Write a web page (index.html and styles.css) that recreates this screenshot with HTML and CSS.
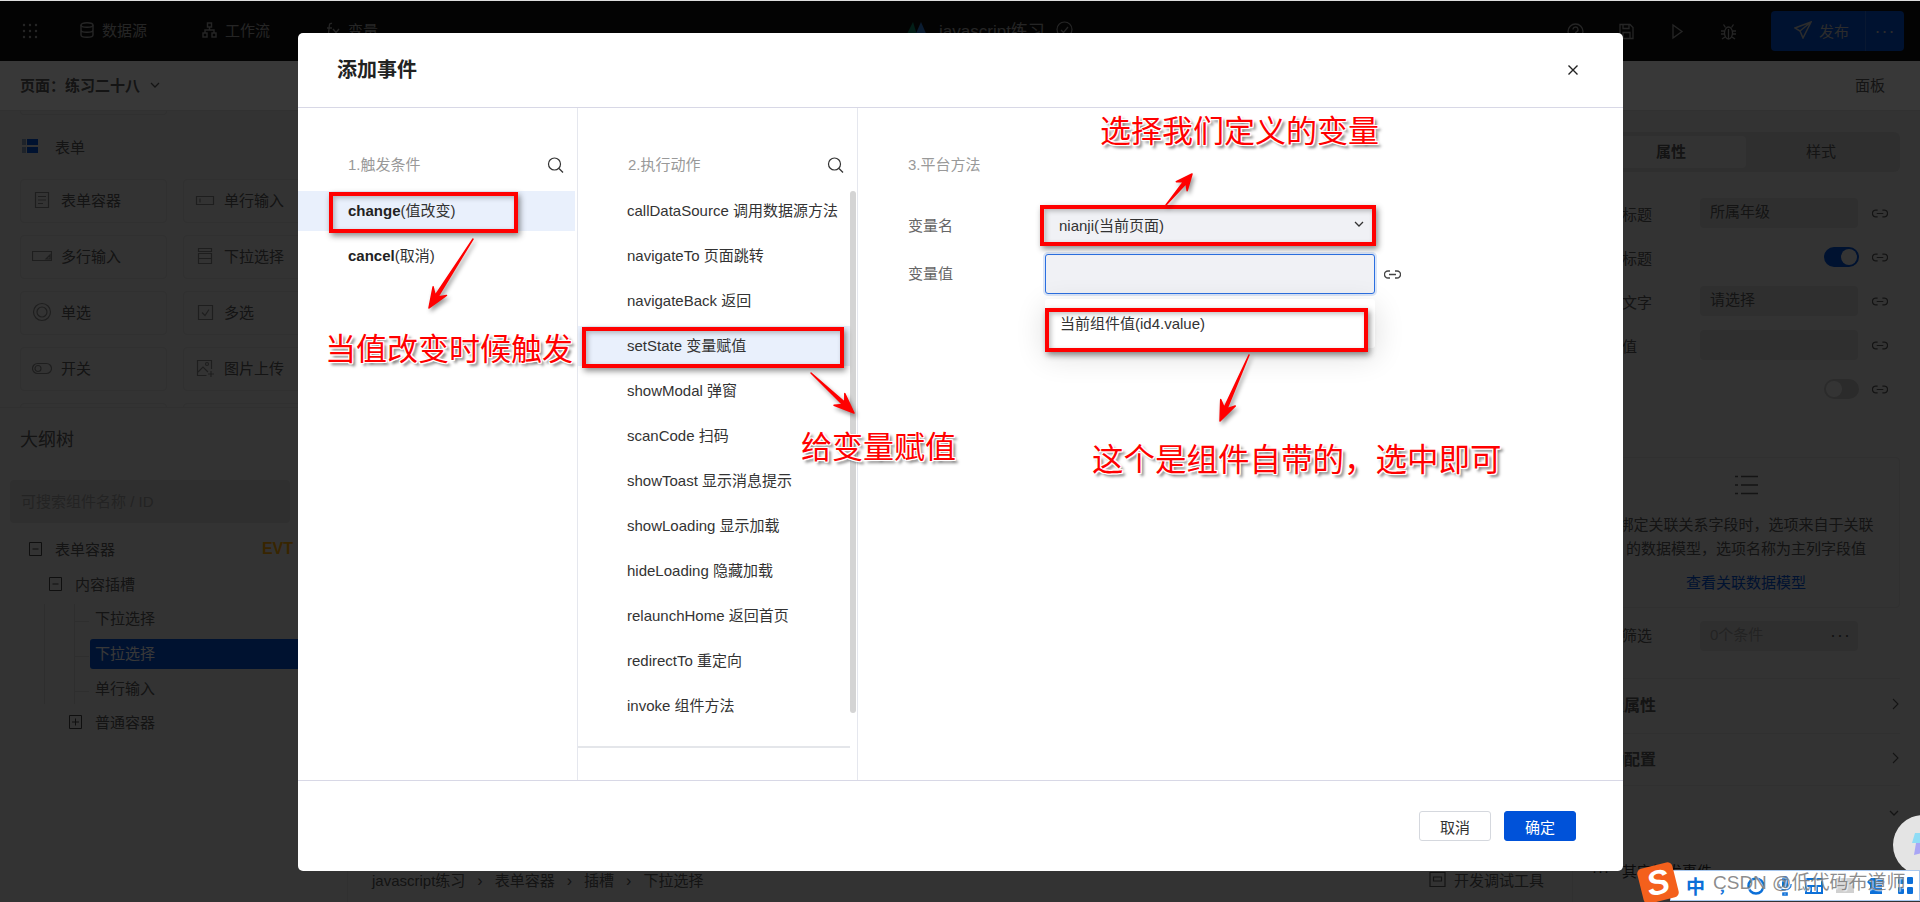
FILE: index.html
```html
<!DOCTYPE html>
<html lang="zh-CN">
<head>
  <meta charset="UTF-8">
  <title>添加事件</title>
  <link rel="stylesheet" href="styles.css">
</head>
<body>

<svg class="sprite" width="0" height="0">
  <symbol id="i-link" viewBox="0 0 17 9"><path d="M6 1H4a3.5 3.5 0 0 0 0 7h2M11 1h2a3.5 3.5 0 0 1 0 7h-2M5 4.5h7" fill="none" stroke="currentColor" stroke-width="1.3"/></symbol>
  <symbol id="i-search" viewBox="0 0 17 16"><circle cx="7.5" cy="7" r="6" fill="none" stroke="currentColor" stroke-width="1.2"/><path d="M12 11.5l4 4" stroke="currentColor" stroke-width="1.3"/></symbol>
  <symbol id="i-down" viewBox="0 0 10 6"><path d="M1 1l4 4 4-4" fill="none" stroke="currentColor" stroke-width="1.3"/></symbol>
  <symbol id="i-right" viewBox="0 0 7 12"><path d="M1 1l5 5-5 5" fill="none" stroke="currentColor" stroke-width="1.1"/></symbol>
  <symbol id="i-minus" viewBox="0 0 13 14"><path d="M.5.5h12v13H.5zM3.5 7h6" fill="none" stroke="currentColor"/></symbol>
  <symbol id="i-plus" viewBox="0 0 13 14"><path d="M.5.5h12v13H.5zM3 7h7M6.500 3.500v7" fill="none" stroke="currentColor"/></symbol>
</svg>

<div class="app">
  <header class="topbar">
    <svg class="grid-icon" width="16" height="16" viewBox="0 0 16 16" fill="currentColor"><circle cx="2" cy="2" r="1.2"/><circle cx="8" cy="2" r="1.2"/><circle cx="14" cy="2" r="1.2"/><circle cx="2" cy="8" r="1.2"/><circle cx="8" cy="8" r="1.2"/><circle cx="14" cy="8" r="1.2"/><circle cx="2" cy="14" r="1.2"/><circle cx="8" cy="14" r="1.2"/><circle cx="14" cy="14" r="1.2"/></svg>
    <nav class="top-nav">
      <span class="top-nav-item">
        <svg width="14" height="16" viewBox="0 0 14 16" fill="none" stroke="currentColor" stroke-width="1.4"><ellipse cx="7" cy="3" rx="6" ry="2.300"/><path d="M1 3v10c0 1.300 2.700 2.300 6 2.300s6-1 6-2.300V3M1 8c0 1.300 2.700 2.300 6 2.300s6-1 6-2.300"/></svg>
        数据源
      </span>
      <span class="top-nav-item">
        <svg width="15" height="16" viewBox="0 0 15 16" fill="none" stroke="currentColor" stroke-width="1.4"><rect x="5.500" y="1" width="4" height="4"/><rect x="1" y="11" width="4" height="4"/><rect x="10" y="11" width="4" height="4"/><path d="M7.500 5v3M3 11V8h9v3"/></svg>
        工作流
      </span>
      <span class="top-nav-item">
        <svg width="15" height="16" viewBox="0 0 15 16" fill="none" stroke="currentColor" stroke-width="1.3"><path d="M7 1.500C5 1 4.500 2 4.300 4L3.500 12c-.2 2-1 2.500-2.500 2M2 6h5M8 7l6 7M14 7l-6 7"/></svg>
        变量
      </span>
    </nav>
    <div class="app-title">
      <svg width="23" height="16" viewBox="0 0 23 16"><path d="M0 16L8 0l5 16z" fill="#0d8a6a"/><path d="M9 16L16 0l7 16z" fill="#2f7fe0"/></svg>
      <span>javascript练习</span>
      <svg width="17" height="17" viewBox="0 0 17 17" fill="none" stroke="currentColor" stroke-width="1.200"><circle cx="8.500" cy="8.500" r="7.500"/><path d="M5 9l2.500 2.500L12 6"/></svg>
    </div>
    <div class="top-tools">
      <svg width="17" height="17" viewBox="0 0 17 17" fill="none" stroke="currentColor" stroke-width="1.300"><circle cx="8.500" cy="8.500" r="7.500"/><path d="M6 6.500a2.500 2.500 0 1 1 3.500 2.300c-.7.300-1 .8-1 1.700M8.500 12v1.500"/></svg>
      <svg width="17" height="17" viewBox="0 0 17 17" fill="none" stroke="currentColor" stroke-width="1.300"><path d="M2 1.500h10l3 3v11H2zM5 1.500v4h6v-4M5 15.500v-6h7v6"/></svg>
      <svg width="17" height="17" viewBox="0 0 17 17" fill="none" stroke="currentColor" stroke-width="1.300"><path d="M4 2v13l9-6.500z"/></svg>
      <svg width="17" height="17" viewBox="0 0 17 17" fill="none" stroke="currentColor" stroke-width="1.300"><ellipse cx="8.500" cy="10" rx="4" ry="6"/><path d="M5.500 4.500l-2-3M11.500 4.500l2-3M4.500 8H1M4.500 11H1M5 14l-3 2M12.500 8H16M12.500 11H16M12 14l3 2M8.500 6v10"/></svg>
      <div class="publish">
        <span class="publish-main">
          <svg width="18" height="18" viewBox="0 0 18 18" fill="none" stroke="currentColor" stroke-width="1.500"><path d="M17 1L1 7l5 3 3 7zM6 10L17 1"/></svg>
          发布
        </span>
        <span class="publish-more">···</span>
      </div>
    </div>
  </header>

  <div class="subbar">
    <span class="page-name">页面：练习二十八 <svg width="10" height="6"><use href="#i-down"/></svg></span>
    <span class="panel-link">面板</span>
  </div>

  <main class="workspace">
    <aside class="left-panel">
      <section class="widgets">
        <div class="widget-stub"></div>
        <h3 class="widgets-title">
          <svg width="16" height="14" viewBox="0 0 16 14"><rect width="4" height="6" fill="#8aa0c0"/><rect x="5" width="11" height="6" fill="#0052d9"/><rect y="8" width="4" height="6" fill="#8aa0c0"/><rect x="5" y="8" width="11" height="6" fill="#0052d9"/></svg>
          表单
        </h3>
        <div class="widget-grid">
          <div class="widget"><svg viewBox="0 0 20 20" class="widget-icon"><path d="M3.500 2.500h13v15h-13zM6 6.500h8M6 10h8M6 13.500h5"/></svg>表单容器</div>
          <div class="widget"><svg viewBox="0 0 20 20" class="widget-icon"><path d="M1.500 6.500h17v8h-17zM5 8.500v4"/></svg>单行输入</div>
          <div class="widget"><svg viewBox="0 0 20 20" class="widget-icon"><path d="M.5 5.500h19v9H.5zM18 9l-4 4h4z"/></svg>多行输入</div>
          <div class="widget"><svg viewBox="0 0 20 20" class="widget-icon"><path d="M3.500 2.500h13v3h-13zM3.500 7.500h13v10h-13zM3.500 12.500h13"/></svg>下拉选择</div>
          <div class="widget"><svg viewBox="0 0 20 20" class="widget-icon"><circle cx="10" cy="10" r="8.500"/><circle cx="10" cy="10" r="5"/></svg>单选</div>
          <div class="widget"><svg viewBox="0 0 20 20" class="widget-icon"><path d="M3.500 3.500h14v14h-14zM7 10.500l3 3 4-6"/></svg>多选</div>
          <div class="widget"><svg viewBox="0 0 20 20" class="widget-icon"><rect x=".5" y="5.500" width="19" height="10" rx="5"/><circle cx="6" cy="10.500" r="3"/></svg>开关</div>
          <div class="widget"><svg viewBox="0 0 20 20" class="widget-icon"><path d="M16.500 11V2.500h-14v15h9M3 14l5-5 5 5M16 13v6M13 16h6"/><circle cx="12" cy="6" r="1.500"/></svg>图片上传</div>
          <div class="widget"></div>
          <div class="widget"></div>
        </div>
      </section>

      <section class="outline">
        <h3 class="outline-title">大纲树</h3>
        <div class="outline-search">可搜索组件名称 / ID</div>
        <div class="tree">
          <div class="tree-row tree-root">
            <svg class="tree-toggle"><use href="#i-minus"/></svg>
            <span>表单容器</span>
            <b class="evt">EVT</b>
          </div>
          <div class="tree-row tree-slot">
            <svg class="tree-toggle"><use href="#i-minus"/></svg>
            <span>内容插槽</span>
          </div>
          <div class="tree-guide">
            <div class="tree-guide-inner">
              <div class="tree-leaf">下拉选择</div>
              <div class="tree-leaf selected">下拉选择</div>
              <div class="tree-leaf">单行输入</div>
            </div>
          </div>
          <div class="tree-row tree-box">
            <svg class="tree-toggle"><use href="#i-plus"/></svg>
            <span>普通容器</span>
          </div>
        </div>
      </section>
    </aside>

    <div class="center">
      <div class="canvas"></div>
      <footer class="statusbar">
        <div class="crumbs">
          <span>javascript练习</span><i>›</i><span>表单容器</span><i>›</i><span>插槽</span><i>›</i><span>下拉选择</span>
        </div>
        <div class="devtools">
          <svg width="17" height="17" viewBox="0 0 17 17" fill="none" stroke="currentColor" stroke-width="1.200"><path d="M1 1.500h15v14H1zM4.500 6h8v4h-8z"/></svg>
          开发调试工具
        </div>
      </footer>
    </div>

    <aside class="right-panel">
      <div class="tabs">
        <span class="tab active">属性</span>
        <span class="tab">样式</span>
      </div>

      <div class="prop-row">
        <span>选项标题</span><span class="prop-input">所属年级</span>
        <svg class="prop-link"><use href="#i-link"/></svg>
      </div>
      <div class="prop-row">
        <span>显示标题</span><span class="toggle on"></span>
        <svg class="prop-link"><use href="#i-link"/></svg>
      </div>
      <div class="prop-row">
        <span>占位文字</span><span class="prop-input">请选择</span>
        <svg class="prop-link"><use href="#i-link"/></svg>
      </div>
      <div class="prop-row">
        <span>默认值</span><span class="prop-input"></span>
        <svg class="prop-link"><use href="#i-link"/></svg>
      </div>
      <div class="prop-row">
        <span>必填</span><span class="toggle"></span>
        <svg class="prop-link"><use href="#i-link"/></svg>
      </div>

      <div class="relation-box">
        <svg width="23" height="20" viewBox="0 0 23 20" fill="none" stroke="currentColor" stroke-width="1.500"><path d="M0 1.500h3M6 1.500h17M0 10h3M6 10h17M0 18.500h3M6 18.500h17"/></svg>
        <p>绑定关联关系字段时，选项来自于关联<br>的数据模型，选项名称为主列字段值</p>
        <a class="relation-link">查看关联数据模型</a>
      </div>

      <div class="prop-row filter-row">
        <span>数据筛选</span><span class="prop-input filter-input">0个条件<em>···</em></span>
      </div>

      <div class="fold fold-first"><b>高级属性</b><svg width="7" height="12"><use href="#i-right"/></svg></div>
      <div class="fold fold-second"><b>联动配置</b><svg width="7" height="12"><use href="#i-right"/></svg></div>
      <div class="fold fold-open"><svg width="10" height="6"><use href="#i-down"/></svg></div>
      <div class="fold-extra"><span class="fold-dots">···</span>其它触发事件</div>
    </aside>
  </main>

  <div class="mask"></div>

  <!-- 添加事件 弹窗 -->
  <div class="modal">
    <div class="modal-head">
      <h2>添加事件</h2>
      <svg class="modal-close" width="10" height="10" viewBox="0 0 10 10"><path d="M.5.500l9 9M9.500.500l-9 9" stroke="#222" stroke-width="1.400"/></svg>
    </div>

    <div class="modal-body">
      <div class="col col-trigger">
        <div class="col-head"><span>1.触发条件</span><svg class="col-search"><use href="#i-search"/></svg></div>
        <div class="col-item active"><b>change</b>(值改变)</div>
        <div class="col-item"><b>cancel</b>(取消)</div>
      </div>

      <div class="col col-action">
        <div class="col-head"><span>2.执行动作</span><svg class="col-search"><use href="#i-search"/></svg></div>
        <div class="action-scroll">
          <div class="action-list">
            <div class="col-item">callDataSource 调用数据源方法</div>
            <div class="col-item">navigateTo 页面跳转</div>
            <div class="col-item">navigateBack 返回</div>
            <div class="col-item active">setState 变量赋值</div>
            <div class="col-item">showModal 弹窗</div>
            <div class="col-item">scanCode 扫码</div>
            <div class="col-item">showToast 显示消息提示</div>
            <div class="col-item">showLoading 显示加载</div>
            <div class="col-item">hideLoading 隐藏加载</div>
            <div class="col-item">relaunchHome 返回首页</div>
            <div class="col-item">redirectTo 重定向</div>
            <div class="col-item">invoke 组件方法</div>
          </div>
          <div class="scroll-thumb"></div>
        </div>
        <div class="action-line"></div>
      </div>

      <div class="col col-method">
        <div class="col-head"><span>3.平台方法</span></div>
        <div class="form-row">
          <label>变量名</label>
          <div class="field select">nianji(当前页面)<svg width="10" height="6"><use href="#i-down"/></svg></div>
        </div>
        <div class="form-row">
          <label>变量值</label>
          <div class="field focus">
            <div class="dropdown">当前组件值(id4.value)</div>
          </div>
          <svg class="field-link"><use href="#i-link"/></svg>
        </div>
      </div>
    </div>

    <div class="modal-foot">
      <button class="btn">取消</button>
      <button class="btn primary">确定</button>
    </div>
  </div>

  <!-- 截图上的红色标注 -->
  <div class="mark mark-change"></div>
  <div class="mark mark-state"></div>
  <div class="mark mark-select"></div>
  <div class="mark mark-option"></div>

  <svg class="arrows" width="1920" height="902">
    <polygon points="473,239 437.800,297 446.500,295.400 429,308 433.100,286.800 435.200,295.400"/>
    <polygon points="811,373 844.800,402.400 844.800,393.500 854,413 834,405.300 842.800,404.600"/>
    <polygon points="1166,205 1186.100,183.400 1187.100,190.700 1192,174 1176.300,181.700 1183.700,181.400"/>
    <polygon points="1249,355 1227,408.800 1235.300,405.900 1220,421 1220.700,399.500 1224.200,407.600"/>
  </svg>

  <div class="note note-change">当值改变时候触发</div>
  <div class="note note-select">选择我们定义的变量</div>
  <div class="note note-state">给变量赋值</div>
  <div class="note note-option">这个是组件自带的，选中即可</div>

  <div class="float-ball">
    <svg width="10" height="22" viewBox="0 0 10 22"><path d="M3 0h7v10H0z" fill="#8fdcf5"/><path d="M4 10h6v10l-8 2z" fill="#a9a6f5"/></svg>
  </div>

  <div class="ime">
    <div class="ime-logo">S</div>
    <div class="ime-bar">
      <span class="ime-zh">中</span>
      <span class="ime-punct">，</span>
      <svg width="18" height="18" viewBox="0 0 18 18"><circle cx="9" cy="9" r="7.500" fill="none" stroke="#0b6fd8" stroke-width="2.500"/></svg>
      <svg width="14" height="20" viewBox="0 0 14 20" fill="#0b6fd8"><rect x="4" y="0" width="6" height="12" rx="3"/><path d="M1 8a6 6 0 0 0 12 0M5 17h4v2H5z" fill="none" stroke="#0b6fd8" stroke-width="1.600"/></svg>
      <svg width="18" height="16" viewBox="0 0 18 16" fill="none" stroke="#0b6fd8" stroke-width="2"><path d="M1 1h16v14H1zM1 8h16M6 8v7M12 8v7"/></svg>
      <span class="ime-gray"></span>
      <svg width="18" height="16" viewBox="0 0 18 16" fill="#0b6fd8"><path d="M4 0h10l4 4-3 3v9H3V7L0 4z"/></svg>
      <svg width="15" height="17" viewBox="0 0 15 17" fill="#0b6fd8"><rect width="6" height="7" rx="1"/><rect x="9" width="6" height="7" rx="1"/><rect y="10" width="6" height="7" rx="1"/><rect x="9" y="10" width="6" height="7" rx="1"/></svg>
    </div>
  </div>
  <div class="watermark">CSDN @低代码布道师</div>
</div>

</body>
</html>
```

FILE: styles.css
```css
* {
  box-sizing: border-box;
}

body {
  margin: 0;
  font-family: "Liberation Sans", "Noto Sans CJK SC", sans-serif;
  font-size: 15px;
  color: #5a5a5a;
  background: #ddd;
  overflow: hidden;
}

.sprite {
  position: absolute;
}

h2,
h3,
p {
  margin: 0;
  font-weight: normal;
}

.app {
  position: relative;
  width: 1920px;
  height: 902px;
  padding-top: 1px;
  display: flex;
  flex-direction: column;
  overflow: hidden;
}

/* 顶部栏 */
.topbar {
  height: 60px;
  flex: none;
  background: #111;
  color: #a8a8a8;
  display: flex;
  align-items: center;
  padding-left: 22px;
  padding-bottom: 0;
}

.top-nav {
  display: flex;
  gap: 55px;
  margin: -3px 0 0 42px;
}

.top-nav-item {
  display: flex;
  align-items: center;
  gap: 8px;
}

.app-title {
  display: flex;
  align-items: center;
  gap: 11px;
  margin: -3px 0 0 527px;
  font-size: 17px;
}

.top-tools {
  margin-left: auto;
  margin-right: 16px;
  display: flex;
  align-items: center;
  gap: 34px;
}

.publish {
  width: 133px;
  height: 40px;
  background: #0052d9;
  border-radius: 4px;
  display: flex;
  align-items: center;
  color: #c8c8c8;
}

.publish-main {
  width: 95px;
  height: 100%;
  padding: 0 0 2px 23px;
  display: flex;
  align-items: center;
  gap: 7px;
  border-right: 1px solid #2b6ee0;
}

.publish-more {
  flex: 1;
  text-align: center;
  font-size: 18px;
  letter-spacing: 1px;
}

/* 页面名称栏 */
.subbar {
  height: 50px;
  flex: none;
  background: #fff;
  border-bottom: 1px solid #e0e0e0;
  display: flex;
  justify-content: space-between;
  align-items: center;
  padding: 0 35px 2px 20px;
}

.page-name {
  font-weight: bold;
  display: flex;
  align-items: center;
  gap: 10px;
}

.workspace {
  flex: 1;
  min-height: 0;
  display: flex;
  background: #e8e8e8;
}

/* 左侧面板 */
.left-panel {
  width: 348px;
  flex: none;
  border-right: 1px solid #d9d9d9;
}

.widgets {
  height: 297px;
  overflow: hidden;
  border-bottom: 1px solid #d9d9d9;
}

.widget-stub {
  width: 147px;
  height: 4px;
  margin-left: 20px;
  border: 1px solid #d9d9d9;
  border-top: 0;
  border-radius: 0 0 4px 4px;
}

.widgets-title {
  height: 20px;
  margin: 21px 0 23px 22px;
  display: flex;
  align-items: center;
  gap: 17px;
  font-size: 15px;
}

.widget-grid {
  display: grid;
  grid-template-columns: 147px 147px;
  grid-auto-rows: 44px;
  gap: 12px 16px;
  margin-left: 20px;
}

.widget {
  border: 1px solid #d9d9d9;
  border-radius: 4px;
  display: flex;
  align-items: center;
  gap: 9px;
  padding: 0 0 3px 11px;
}

.widget-icon {
  width: 20px;
  height: 20px;
  fill: none;
  stroke: #8a8a8a;
  stroke-width: 1.2;
}

.outline {
  position: relative;
}

.outline-title {
  font-size: 18px;
  line-height: 24px;
  padding: 20px 0 0 20px;
}

.outline-search {
  width: 280px;
  height: 43px;
  margin: 28px 0 8px 10px;
  padding-left: 11px;
  line-height: 43px;
  background: #d6d6d6;
  border-radius: 4px;
  color: #a0a0a0;
}

.tree {
  width: 293px;
}

.tree-row {
  height: 35px;
  display: flex;
  align-items: center;
  gap: 13px;
}

.tree-root {
  padding-left: 29px;
}

.tree-slot {
  padding-left: 49px;
}

.tree-box {
  padding-left: 69px;
}

.tree-toggle {
  width: 13px;
  height: 14px;
  color: #444;
}

.evt {
  margin-left: auto;
  font-size: 16px;
  color: #ffa800;
}

.tree-guide {
  margin: 3px 0 0 44px;
  border-left: 1px solid #d0d0d0;
}

.tree-guide-inner {
  margin-left: 29px;
  border-left: 1px solid #d0d0d0;
}

.tree-leaf {
  position: relative;
  height: 30px;
  line-height: 30px;
  margin: 0 -60px 5px 15px;
  padding-left: 5px;
  border-radius: 3px 0 0 3px;
}

.tree-leaf:last-child {
  margin-bottom: 0;
}

.tree-leaf::before {
  content: "";
  position: absolute;
  left: -15px;
  top: 17px;
  width: 14px;
  border-top: 1px solid #d0d0d0;
}

.tree-leaf.selected {
  background: #0052d9;
  color: #fff;
}

/* 中间 */
.center {
  flex: 1;
  min-width: 0;
  display: flex;
  flex-direction: column;
}

.canvas {
  flex: 1;
}

.statusbar {
  height: 31px;
  flex: none;
  display: flex;
  justify-content: space-between;
  padding: 0 28px 0 24px;
  line-height: 20px;
}

.crumbs {
  display: flex;
  gap: 12px;
}

.crumbs i {
  font-style: normal;
  font-size: 16px;
}

.devtools {
  display: flex;
  gap: 8px;
  align-items: flex-start;
}

/* 右侧面板 */
.right-panel {
  width: 348px;
  flex: none;
  border-left: 1px solid #d9d9d9;
  padding: 21px 20px 0 19px;
  overflow: hidden;
}

.tabs {
  height: 40px;
  margin-bottom: 19px;
  padding: 4px;
  display: flex;
  background: #d6d6d6;
  border-radius: 6px;
}

.tab {
  flex: 1;
  text-align: center;
  line-height: 31px;
}

.tab.active {
  background: #e8e8e8;
  font-weight: bold;
  border-radius: 4px;
}

.prop-row {
  height: 44px;
  display: grid;
  grid-template-columns: 108px 158px 30px;
  align-items: center;
}

.prop-input {
  height: 30px;
  padding-left: 10px;
  line-height: 28px;
  background: #d6d6d6;
  border-radius: 4px;
}

.prop-link {
  width: 16px;
  height: 9px;
  margin-left: 14px;
  color: #5a5a5a;
}

.toggle {
  width: 35px;
  height: 20px;
  justify-self: end;
  margin-right: -1px;
  background: #c2c2c2;
  border-radius: 10px;
  position: relative;
}

.toggle::after {
  content: "";
  position: absolute;
  left: 2px;
  top: 2px;
  width: 16px;
  height: 16px;
  border-radius: 50%;
  background: #eee;
}

.toggle.on {
  background: #0052d9;
}

.toggle.on::after {
  left: 17px;
}

.relation-box {
  height: 151px;
  margin-top: 46px;
  border: 1px solid #d9d9d9;
  border-radius: 4px;
  display: flex;
  flex-direction: column;
  align-items: center;
  padding-top: 17px;
  line-height: 24px;
  text-align: center;
}

.relation-box p {
  margin-top: 18px;
  white-space: nowrap;
}

.relation-link {
  margin-top: 10px;
  color: #0052d9;
}

.filter-row {
  margin: 6px 0 20px;
}

.filter-row > span:first-child {
  margin-bottom: 3px;
}

.filter-input {
  display: flex;
  justify-content: space-between;
  padding-right: 7px;
  color: #a0a0a0;
}

.filter-input em {
  font-style: normal;
  color: #555;
  font-size: 18px;
  letter-spacing: 1px;
}

.fold {
  display: flex;
  justify-content: space-between;
  align-items: center;
  border-top: 1px solid #d9d9d9;
  padding: 0 1px 4px 0;
  font-size: 16px;
}

.fold-first {
  height: 55px;
}

.fold-second {
  height: 52px;
}

.fold-open {
  height: 52px;
  justify-content: flex-end;
  padding: 3px 1px 0 0;
}

.fold-extra {
  margin-top: 23px;
  display: flex;
  align-items: center;
  color: #333;
}

.fold-dots {
  width: 30px;
  letter-spacing: 1px;
}

/* 遮罩 */
.mask {
  position: absolute;
  left: 0;
  right: 0;
  top: 1px;
  bottom: 0;
  background: rgba(0, 0, 0, 0.78);
}

/* 弹窗 */
.modal {
  position: absolute;
  left: 298px;
  top: 33px;
  width: 1325px;
  height: 838px;
  background: #fff;
  border-radius: 5px;
  display: flex;
  flex-direction: column;
  color: #333;
}

.modal-head {
  height: 75px;
  flex: none;
  border-bottom: 1px solid #d8d8e6;
  display: flex;
  justify-content: space-between;
  align-items: center;
  padding: 0 45px 3px 39px;
}

.modal-head h2 {
  font-size: 20px;
  font-weight: bold;
  color: #222;
}

.modal-close {
  margin-top: 2px;
}

.modal-body {
  flex: 1;
  min-height: 0;
  display: flex;
}

.col {
  border-right: 1px solid #e5e7ee;
}

.col-trigger {
  width: 280px;
}

.col-action {
  width: 280px;
}

.col-method {
  flex: 1;
  border-right: 0;
  padding-left: 50px;
}

.col-head {
  height: 83px;
  padding: 45px 0 14px 50px;
  display: flex;
  align-items: center;
  justify-content: space-between;
  color: #999;
}

.col-head span {
  margin-bottom: 4px;
}

.col-search {
  width: 17px;
  height: 16px;
  margin-right: 13px;
  color: #333;
}

.col-item {
  height: 40px;
  line-height: 40px;
  margin-bottom: 5px;
  padding-left: 50px;
  white-space: nowrap;
}

.col-item.active {
  background: #e9f0fc;
}

.col-trigger .col-item.active {
  margin-right: 2px;
}

.col-item b {
  color: #222;
}

.action-scroll {
  height: 555px;
  display: flex;
  gap: 0;
}

.action-list {
  width: 272px;
}

.action-list .col-item {
  padding-left: 49px;
}

.scroll-thumb {
  width: 6px;
  height: 522px;
  background: #d4d4d4;
  border-radius: 3px;
}

.action-line {
  width: 272px;
  height: 2px;
  background: #e4e6ea;
}

.col-method .col-head {
  padding-left: 0;
  margin-bottom: 15px;
}

.form-row {
  display: flex;
  align-items: center;
  height: 40px;
  margin-bottom: 8px;
}

.form-row label {
  width: 137px;
  margin-bottom: 3px;
  color: #666;
}

.field {
  position: relative;
  width: 330px;
  height: 40px;
  background: #f0f1f5;
  border-radius: 3px;
}

.select {
  display: flex;
  justify-content: space-between;
  align-items: center;
  padding: 0 11px 4px 14px;
}

.focus {
  border: 1px solid #2b6fe0;
  box-shadow: 0 0 0 2px #dbe6f8;
}

.dropdown {
  position: absolute;
  left: -1px;
  top: 44px;
  width: 330px;
  height: 49px;
  padding: 13px 15px;
  line-height: 24px;
  background: #fff;
  border-radius: 3px;
  box-shadow: 0 8px 30px rgba(0, 0, 0, 0.14);
}

.field-link {
  width: 17px;
  height: 9px;
  margin-left: 9px;
  color: #444;
}

.modal-foot {
  height: 91px;
  flex: none;
  border-top: 1px solid #d8d8e6;
  display: flex;
  justify-content: flex-end;
  gap: 13px;
  padding: 30px 47px 0 0;
}

.btn {
  width: 72px;
  height: 30px;
  padding: 0;
  font: inherit;
  color: #333;
  background: #fff;
  border: 1px solid #d5d8de;
  border-radius: 3px;
}

.btn.primary {
  color: #fff;
  background: #0052d9;
  border-color: #0052d9;
}

/* 红色标注 */
.mark {
  position: absolute;
  border: 4px solid #f00;
  box-shadow: 2px 3px 6px rgba(0, 0, 0, 0.45), inset 2px 2px 5px rgba(0, 0, 0, 0.25);
}

.mark-change {
  left: 329px;
  top: 192px;
  width: 189px;
  height: 41px;
}

.mark-state {
  left: 582px;
  top: 327px;
  width: 262px;
  height: 41px;
}

.mark-select {
  left: 1040px;
  top: 205px;
  width: 336px;
  height: 41px;
}

.mark-option {
  left: 1045px;
  top: 308px;
  width: 323px;
  height: 44px;
}

.arrows {
  position: absolute;
  left: 0;
  top: 0;
  fill: #f00;
  stroke: #f00;
  stroke-width: 1.5;
  stroke-linejoin: round;
  filter: drop-shadow(2px 3px 2px rgba(0, 0, 0, 0.4));
}

.note {
  position: absolute;
  color: #f00;
  font-size: 31px;
  line-height: 40px;
  white-space: nowrap;
  text-shadow: 1px 0 #fff, -1px 0 #fff, 0 1px #fff, 0 -1px #fff, 1px 1px #fff, -1px -1px #fff, 1px -1px #fff, -1px 1px #fff, 3px 3px 3px rgba(0, 0, 0, 0.55);
}

.note-change {
  left: 325px;
  top: 330px;
}

.note-select {
  left: 1100px;
  top: 112px;
}

.note-state {
  left: 801px;
  top: 428px;
}

.note-option {
  left: 1092px;
  top: 440px;
  font-size: 31.500px;
}

/* 右下角悬浮球和输入法 */
.float-ball {
  position: absolute;
  left: 1893px;
  top: 815px;
  width: 60px;
  height: 60px;
  padding: 18px 0 0 19px;
  border-radius: 50%;
  background: #e4e4e4;
}

.ime {
  position: absolute;
  left: 1638px;
  top: 864px;
  width: 282px;
  height: 38px;
}

.ime-logo {
  position: absolute;
  left: 2px;
  top: 1px;
  z-index: 1;
  width: 36px;
  height: 36px;
  text-align: center;
  line-height: 34px;
  font-size: 34px;
  font-weight: bold;
  font-style: italic;
  color: #fff;
  background: #f4601c;
  border-radius: 5px;
  transform: rotate(-14deg);
}

.ime-bar {
  position: absolute;
  left: 32px;
  top: 6px;
  width: 250px;
  height: 31px;
  display: flex;
  align-items: center;
  gap: 13px;
  padding-left: 15px;
  background: #fff;
  border: 1px solid #a9c8ee;
}

.ime-zh {
  font-size: 19px;
  font-weight: bold;
  color: #0b6fd8;
}

.ime-punct {
  width: 16px;
  color: #0b6fd8;
  font-weight: bold;
}

.ime-gray {
  width: 18px;
  height: 15px;
  background: #d0d0d0;
}

.watermark {
  position: absolute;
  left: 1713px;
  top: 871px;
  font-size: 19px;
  line-height: 24px;
  white-space: nowrap;
  color: rgba(120, 120, 120, 0.85);
  text-shadow: 1px 1px 1px rgba(255, 255, 255, 0.8);
}
```
